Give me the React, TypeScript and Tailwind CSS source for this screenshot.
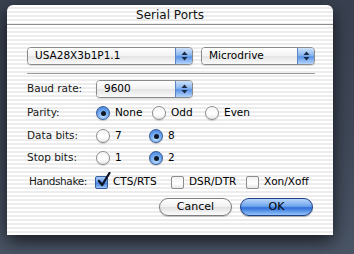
import React from 'react';

const font = { fontFamily: '"DejaVu Sans", "Liberation Sans", sans-serif' };

const Arrows = () => (
  <svg width="7" height="10" viewBox="0 0 7 10">
    <path d="M3.5 0.5 L6.5 4 L0.5 4 Z" fill="#1d2a44" />
    <path d="M3.5 9.5 L6.5 6 L0.5 6 Z" fill="#1d2a44" />
  </svg>
);

const Popup = ({ label, width }: { label: string; width: string }) => (
  <div
    className={`${width} h-[18px] flex rounded-[4px] border border-[#8a8a8a] overflow-hidden shadow-[0_1px_1px_rgba(0,0,0,0.15)]`}
  >
    <div className="flex-1 flex items-center pl-[7px] bg-[linear-gradient(#ffffff,#f2f2f2_50%,#e4e4e4_51%,#fafafa)] text-[10.5px] text-black">
      {label}
    </div>
    <div className="w-[17px] flex items-center justify-center border-l border-[#5b84c4] bg-[linear-gradient(#cfe2fb,#8ab6ef_45%,#5a94e6_55%,#b6d5fb)]">
      <Arrows />
    </div>
  </div>
);

const Radio = ({ on }: { on?: boolean }) =>
  on ? (
    <div className="w-[14px] h-[14px] rounded-full border border-[#375e9c] bg-[radial-gradient(circle_at_50%_75%,#bfe0ff,#6aa3ec_55%,#3b78d6)] flex items-center justify-center shadow-[0_1px_1px_rgba(0,0,0,0.2)]">
      <div className="w-[5px] h-[5px] rounded-full bg-[#101828]" />
    </div>
  ) : (
    <div className="w-[14px] h-[14px] rounded-full border border-[#8d8d8d] bg-[linear-gradient(#f6f6f6,#ffffff_60%,#e6e6e6)] shadow-[0_1px_1px_rgba(0,0,0,0.15)]" />
  );

const Check = ({ on }: { on?: boolean }) =>
  on ? (
    <div className="relative w-[13px] h-[13px] rounded-[2px] border border-[#375e9c] bg-[linear-gradient(#a9cdf8,#5d97e8_50%,#3f7ddb_55%,#9cc7fa)]">
      <svg className="absolute -top-[5px] left-[1px]" width="14" height="16" viewBox="0 0 14 16">
        <path d="M2 9 L5.2 13 L12.5 1" fill="none" stroke="#0e1424" strokeWidth="2.3" strokeLinecap="round" strokeLinejoin="round" />
      </svg>
    </div>
  ) : (
    <div className="w-[13px] h-[13px] rounded-[2px] border border-[#8d8d8d] bg-[linear-gradient(#f2f2f2,#ffffff_60%,#e6e6e6)]" />
  );

const RadioItem = ({ label, on, width }: { label: string; on?: boolean; width: string }) => (
  <div className={`${width} flex items-center gap-[5px]`}>
    <Radio on={on} />
    <span>{label}</span>
  </div>
);

const CheckItem = ({ label, on, width }: { label: string; on?: boolean; width: string }) => (
  <div className={`${width} flex items-center gap-[5px]`}>
    <Check on={on} />
    <span>{label}</span>
  </div>
);

const Row = ({ label, mt, children }: { label: string; mt: string; children: React.ReactNode }) => (
  <div className={`${mt} h-[18px] flex items-center`}>
    <div className="w-[69px] text-[#1a1a1a]">{label}</div>
    <div className="flex items-center">{children}</div>
  </div>
);

export default function App() {
  return (
    <div
      style={font}
      className="w-[354px] h-[254px] overflow-hidden bg-[linear-gradient(#394150,#404959_60%,#4a5566)] pt-[5px] pl-[7px]"
    >
      <div className="w-[326px] h-[230px] rounded-t-[6px] bg-[repeating-linear-gradient(#ffffff_0px,#ffffff_2px,#ececec_2px,#ececec_4px)] shadow-[0_6px_18px_rgba(0,0,0,0.7)] text-[10.5px] text-black">
        <div className="h-[20px] flex items-center justify-center border-b border-[#8c8c8c] text-[12px] text-[#111]">
          Serial Ports
        </div>
        <div className="pl-[20px]">
          <div className="mt-[22px] flex gap-[8px]">
            <Popup label="USA28X3b1P1.1" width="w-[166px]" />
            <Popup label="Microdrive" width="w-[114px]" />
          </div>
          <div className="mt-[8px] w-[288px] h-[2px] border-t border-[#9a9a9a] bg-white" />
          <Row label="Baud rate:" mt="mt-[5px]">
            <Popup label="9600" width="w-[97px]" />
          </Row>
          <Row label="Parity:" mt="mt-[6px]">
            <RadioItem label="None" on width="w-[56px]" />
            <RadioItem label="Odd" width="w-[53px]" />
            <RadioItem label="Even" width="w-[53px]" />
          </Row>
          <Row label="Data bits:" mt="mt-[5px]">
            <RadioItem label="7" width="w-[53px]" />
            <RadioItem label="8" on width="w-[53px]" />
          </Row>
          <Row label="Stop bits:" mt="mt-[4px]">
            <RadioItem label="1" width="w-[53px]" />
            <RadioItem label="2" on width="w-[53px]" />
          </Row>
          <div className="mt-[6px] h-[18px] flex items-center">
            <div className="w-[68px] pl-[2px] text-[#1a1a1a] tracking-[-0.4px]">Handshake:</div>
            <CheckItem label="CTS/RTS" on width="w-[76px]" />
            <CheckItem label="DSR/DTR" width="w-[75px]" />
            <CheckItem label="Xon/Xoff" width="w-[70px]" />
          </div>
          <div className="mt-[7px] flex gap-[8px] pl-[132px]">
            <button className="w-[73px] h-[18px] rounded-full border border-[#7d7d7d] bg-[linear-gradient(#ffffff,#f0f0f0_50%,#e0e0e0_52%,#fdfdfd)] text-[11px] text-black shadow-[0_1px_1px_rgba(0,0,0,0.2)]">
              Cancel
            </button>
            <button className="w-[73px] h-[18px] rounded-full border border-[#1f3f86] bg-[linear-gradient(#b9d6fb,#6fa6ec_45%,#2f6fd8_55%,#93c4fb)] text-[11px] text-black shadow-[0_1px_1px_rgba(0,0,0,0.3)]">
              OK
            </button>
          </div>
        </div>
      </div>
    </div>
  );
}
